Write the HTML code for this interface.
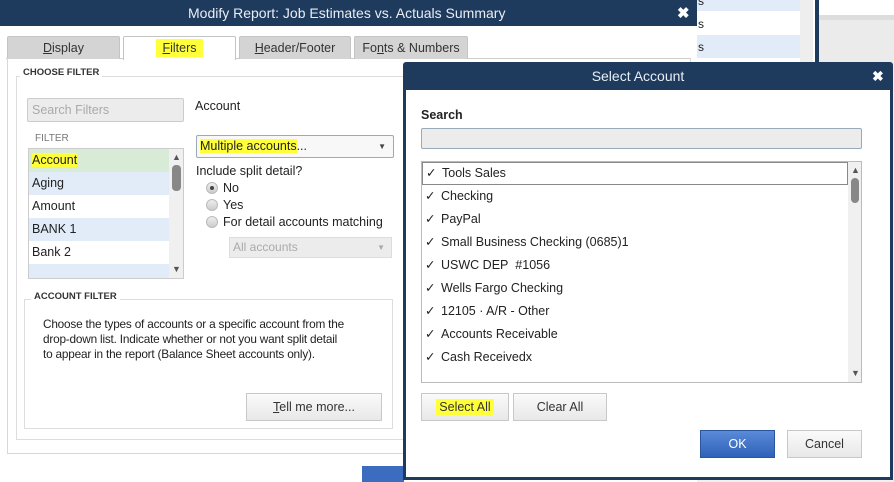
<!DOCTYPE html>
<html><head><style>
*{box-sizing:border-box;margin:0;padding:0}
body{width:894px;height:482px;position:relative;overflow:hidden;background:#f0f0f0;font-family:"Liberation Sans",sans-serif;font-size:12px;color:#222}
.a{position:absolute}
.nav{background:#1e3a5c;color:#e8eef5}
.tab{position:absolute;top:36px;height:23px;background:#d4d4d4;border:1px solid #c4c4c4;border-bottom:none;text-align:center;line-height:22px;font-size:12.5px;color:#333;border-radius:2px 2px 0 0}
.row{position:absolute;left:0;height:23px;line-height:23px;padding-left:3px;font-size:12.5px;width:100%}
.btn{position:absolute;background:linear-gradient(#fafafa,#e8e8e8);border:1px solid #c8c8c8;text-align:center;font-size:12.5px;color:#333}
.hl{background:#ffff3a}
.rad{position:absolute;width:12px;height:12px;border-radius:50%;border:1px solid #bbb;background:linear-gradient(#eee,#ccc)}
.chk{position:absolute;left:0;width:100%;height:23px;line-height:23px;font-size:12.5px}
.chk span{position:absolute;left:3px}
.chk b{position:absolute;left:19px;font-weight:normal}
</style></head><body>
<div class="a" style="left:697px;top:0;width:118px;height:62px;background:#fff"></div>
<div class="a" style="left:697px;top:0;width:103px;height:11px;background:#e2ecf9"></div>
<div class="a" style="left:697px;top:35px;width:103px;height:23px;background:#e2ecf9"></div>
<div class="a" style="left:698px;top:-6px;font-size:12px">s</div>
<div class="a" style="left:698px;top:17px;font-size:12px">s</div>
<div class="a" style="left:698px;top:40px;font-size:12px">s</div>
<div class="a" style="left:800px;top:0;width:13px;height:62px;background:#eee"></div>
<div class="a" style="left:815px;top:0;width:4px;height:62px;background:#1e3a5c"></div>
<div class="a" style="left:819px;top:0;width:75px;height:15px;background:#fff"></div>
<div class="a" style="left:819px;top:15px;width:75px;height:5px;background:#ddd"></div>
<div class="a" style="left:819px;top:20px;width:75px;height:42px;background:#ebebeb"></div>

<div class="a" style="left:0;top:0;width:697px;height:482px;background:#fff"></div>
<div class="a nav" style="left:0;top:0;width:697px;height:26px;line-height:26px;font-size:14px"><span style="position:absolute;left:188px">Modify Report: Job Estimates vs. Actuals Summary</span></div>
<div class="a" style="left:677px;top:4px;color:#fff;font-size:15px;font-weight:bold">✖</div>
<div class="a" style="left:6px;top:58px;width:684px;height:1px;background:#ccc"></div>
<div class="tab" style="left:7px;width:113px"><u>D</u>isplay</div>
<div class="tab" style="left:123px;width:113px;background:#fff;height:24px"><span class="hl" style="padding:2px 6px"><u>F</u>ilters</span></div>
<div class="tab" style="left:239px;width:112px"><u>H</u>eader/Footer</div>
<div class="tab" style="left:354px;width:114px">Fo<u>n</u>ts &amp; Numbers</div>
<div class="a" style="left:7px;top:58px;width:684px;height:396px;border:1px solid #d8d8d8;border-top:none"></div>
<div class="a" style="left:16px;top:76px;width:680px;height:364px;border:1px solid #ddd"></div>
<div class="a" style="left:20px;top:67px;background:#fff;padding:0 3px;font-size:9.5px;font-weight:bold;color:#333">CHOOSE FILTER</div>
<div class="a" style="left:27px;top:98px;width:157px;height:24px;background:#ececec;border:1px solid #ccc;border-radius:2px;color:#aaa;font-size:12.5px;line-height:22px;padding-left:4px">Search Filters</div>
<div class="a" style="left:35px;top:133px;font-size:10px;color:#777">FILTER</div>
<div class="a" style="left:28px;top:148px;width:156px;height:131px;border:1px solid #ccc;overflow:hidden;background:#fff">
<div class="row" style="top:0;background:#d8ebd6"><span class="hl">Account</span></div>
<div class="row" style="top:23px;background:#e2ecf9">Aging</div>
<div class="row" style="top:46px">Amount</div>
<div class="row" style="top:69px;background:#e2ecf9">BANK 1</div>
<div class="row" style="top:92px">Bank 2</div>
<div class="row" style="top:115px;background:#e2ecf9"></div>
<div class="a" style="left:140px;top:0;width:15px;height:131px;background:#f0f0f0"></div>
<div class="a" style="left:143px;top:3px;font-size:9px;color:#555">▲</div>
<div class="a" style="left:143px;top:16px;width:9px;height:26px;background:#888;border-radius:4px"></div>
<div class="a" style="left:143px;top:115px;font-size:9px;color:#555">▼</div>
</div>
<div class="a" style="left:195px;top:99px;font-size:12.5px">Account</div>
<div class="a" style="left:196px;top:135px;width:198px;height:23px;border:1px solid #9ab;border-radius:2px;background:#f8f8f8;line-height:21px;padding-left:3px;font-size:12.5px"><span class="hl">Multiple accounts</span>...<span style="position:absolute;right:7px;font-size:8px;color:#444">▼</span></div>
<div class="a" style="left:196px;top:164px;font-size:12.5px">Include split detail?</div>
<div class="rad" style="left:206px;top:182px"><div style="width:4px;height:4px;background:#444;border-radius:50%;margin:3px"></div></div>
<div class="a" style="left:223px;top:181px;font-size:12.5px">No</div>
<div class="rad" style="left:206px;top:199px"></div>
<div class="a" style="left:223px;top:198px;font-size:12.5px">Yes</div>
<div class="rad" style="left:206px;top:216px"></div>
<div class="a" style="left:223px;top:215px;font-size:12.5px">For detail accounts matching</div>
<div class="a" style="left:229px;top:237px;width:163px;height:21px;background:#ececec;border:1px solid #ddd;color:#aaa;font-size:12px;line-height:19px;padding-left:3px">All accounts<span style="position:absolute;right:6px;font-size:8px">▼</span></div>
<div class="a" style="left:24px;top:299px;width:369px;height:130px;border:1px solid #ddd"></div>
<div class="a" style="left:31px;top:291px;background:#fff;padding:0 3px;font-size:9.5px;font-weight:bold;color:#333">ACCOUNT FILTER</div>
<div class="a" style="left:43px;top:317px;font-size:11.8px;line-height:15px;white-space:nowrap;letter-spacing:-0.2px">Choose the types of accounts or a specific account from the<br>drop-down list. Indicate whether or not you want split detail<br>to appear in the report (Balance Sheet accounts only).</div>
<div class="btn" style="left:246px;top:393px;width:136px;height:28px;line-height:26px"><u>T</u>ell me more...</div>
<div class="a" style="left:362px;top:466px;width:42px;height:16px;background:#3c6cc0"></div>

<div class="a" style="left:403px;top:62px;width:490px;height:418px;background:#1e3a5c;border-radius:3px 3px 0 0"></div>
<div class="a" style="left:406px;top:90px;width:484px;height:387px;background:#fff"></div>
<div class="a" style="left:403px;top:62px;width:470px;height:28px;color:#e8eef5;text-align:center;line-height:28px;font-size:14px">Select Account</div>
<div class="a" style="left:872px;top:68px;color:#fff;font-size:14px;font-weight:bold">✖</div>
<div class="a" style="left:421px;top:108px;font-weight:bold;font-size:12.5px">Search</div>
<div class="a" style="left:421px;top:128px;width:441px;height:21px;background:#ececec;border:1px solid #9ab;border-radius:2px"></div>
<div class="a" style="left:421px;top:161px;width:441px;height:222px;border:1px solid #bbb;overflow:hidden">
<div class="chk" style="top:0;border:1px solid #888;width:426px;left:0;height:23px"><span style="top:-1px">✓</span><b style="top:-1px">Tools Sales</b></div>
<div class="chk" style="top:23px"><span>✓</span><b>Checking</b></div>
<div class="chk" style="top:46px"><span>✓</span><b>PayPal</b></div>
<div class="chk" style="top:69px"><span>✓</span><b>Small Business Checking (0685)1</b></div>
<div class="chk" style="top:92px"><span>✓</span><b>USWC DEP&nbsp; #1056</b></div>
<div class="chk" style="top:115px"><span>✓</span><b>Wells Fargo Checking</b></div>
<div class="chk" style="top:138px"><span>✓</span><b>12105 · A/R - Other</b></div>
<div class="chk" style="top:161px"><span>✓</span><b>Accounts Receivable</b></div>
<div class="chk" style="top:184px"><span>✓</span><b>Cash Receivedx</b></div>
<div class="a" style="left:426px;top:0;width:14px;height:222px;background:#f0f0f0"></div>
<div class="a" style="left:429px;top:3px;font-size:9px;color:#555">▲</div>
<div class="a" style="left:429px;top:16px;width:8px;height:25px;background:#888;border-radius:4px"></div>
<div class="a" style="left:429px;top:206px;font-size:9px;color:#555">▼</div>
</div>
<div class="btn" style="left:421px;top:393px;width:88px;height:28px;line-height:26px"><span class="hl" style="padding:1px 3px">Select All</span></div>
<div class="btn" style="left:513px;top:393px;width:94px;height:28px;line-height:26px">Clear All</div>
<div class="btn" style="left:700px;top:430px;width:75px;height:28px;line-height:26px;background:linear-gradient(#5a8ad8,#2f62b8);border-color:#2a56a0;color:#fff">OK</div>
<div class="btn" style="left:787px;top:430px;width:75px;height:28px;line-height:26px">Cancel</div>
</body></html>
